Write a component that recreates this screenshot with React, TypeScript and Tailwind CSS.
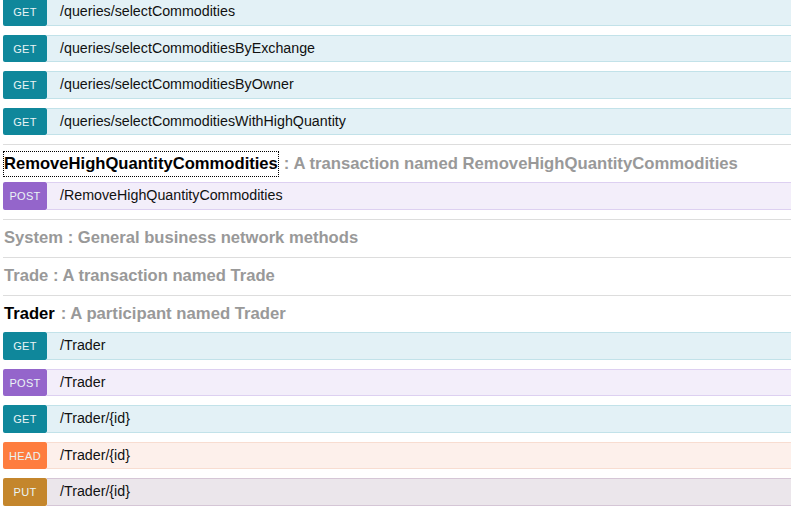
import React from 'react';

type Method = 'GET' | 'POST' | 'HEAD' | 'PUT';

const methodStyles: Record<Method, { badge: string; row: string }> = {
  GET: { badge: 'bg-[#0f879b]', row: 'bg-[#e3f1f6] border-[#c2e2e9]' },
  POST: { badge: 'bg-[#9465cb]', row: 'bg-[#f3eefa] border-[#ddd0f1]' },
  HEAD: { badge: 'bg-[#fe7d3f]', row: 'bg-[#fdf0eb] border-[#f8ddd1]' },
  PUT: { badge: 'bg-[#c4862c]', row: 'bg-[#ebe6eb] border-[#d5c6d6]' },
};

function Endpoint({ method, path }: { method: Method; path: string }) {
  const s = methodStyles[method];
  return (
    <li className="mb-[9px] flex h-[27.6px]">
      <span
        className={`${s.badge} flex w-[44px] shrink-0 items-center justify-center rounded-[2px] pt-px text-[11px] tracking-[0.3px] text-[#eaf4f5]`}
      >
        {method}
      </span>
      <span className={`${s.row} flex flex-1 items-center border-y pl-[13px] text-[14.25px] text-[#111]`}>
        {path}
      </span>
    </li>
  );
}

function Heading({ name, desc, active }: { name: string; desc: string; active?: boolean }) {
  return (
    <h2 className="flex h-[37px] items-center pl-px text-[16.6px] font-bold">
      <span
        className={
          active
            ? 'inline-block leading-[24px] text-black outline-1 outline-dotted outline-black'
            : 'text-[#999]'
        }
      >
        {name}
      </span>
      <span className="ml-[6px] text-[16.7px] text-[#999]">: {desc}</span>
    </h2>
  );
}

export default function App() {
  return (
    <div className="h-[509px] w-[791px] overflow-hidden bg-white font-['Liberation_Sans',Arial,sans-serif]">
      <div className="-mt-[2px] w-[830px] pl-[3px]">
        <section className="border-b border-[#dddddd]">
          <ul>
            <Endpoint method="GET" path="/queries/selectCommodities" />
            <Endpoint method="GET" path="/queries/selectCommoditiesByExchange" />
            <Endpoint method="GET" path="/queries/selectCommoditiesByOwner" />
            <Endpoint method="GET" path="/queries/selectCommoditiesWithHighQuantity" />
          </ul>
        </section>

        <section className="border-b border-[#dddddd]">
          <Heading
            name="RemoveHighQuantityCommodities"
            desc="A transaction named RemoveHighQuantityCommodities"
            active
          />
          <ul>
            <Endpoint method="POST" path="/RemoveHighQuantityCommodities" />
          </ul>
        </section>

        <section className="border-b border-[#dddddd]">
          <h2 className="flex h-[37px] items-center pl-px text-[16.6px] font-bold text-[#999]">
            System : General business network methods
          </h2>
        </section>

        <section className="border-b border-[#dddddd]">
          <h2 className="flex h-[37px] items-center pl-px text-[16.6px] font-bold text-[#999]">
            Trade : A transaction named Trade
          </h2>
        </section>

        <section>
          <h2 className="flex h-[36px] items-center pl-px text-[16.6px] font-bold">
            <span className="text-black">Trader</span>
            <span className="ml-[6px] text-[16.7px] text-[#999]">: A participant named Trader</span>
          </h2>
          <ul>
            <Endpoint method="GET" path="/Trader" />
            <Endpoint method="POST" path="/Trader" />
            <Endpoint method="GET" path="/Trader/{id}" />
            <Endpoint method="HEAD" path="/Trader/{id}" />
            <Endpoint method="PUT" path="/Trader/{id}" />
          </ul>
        </section>
      </div>
    </div>
  );
}
